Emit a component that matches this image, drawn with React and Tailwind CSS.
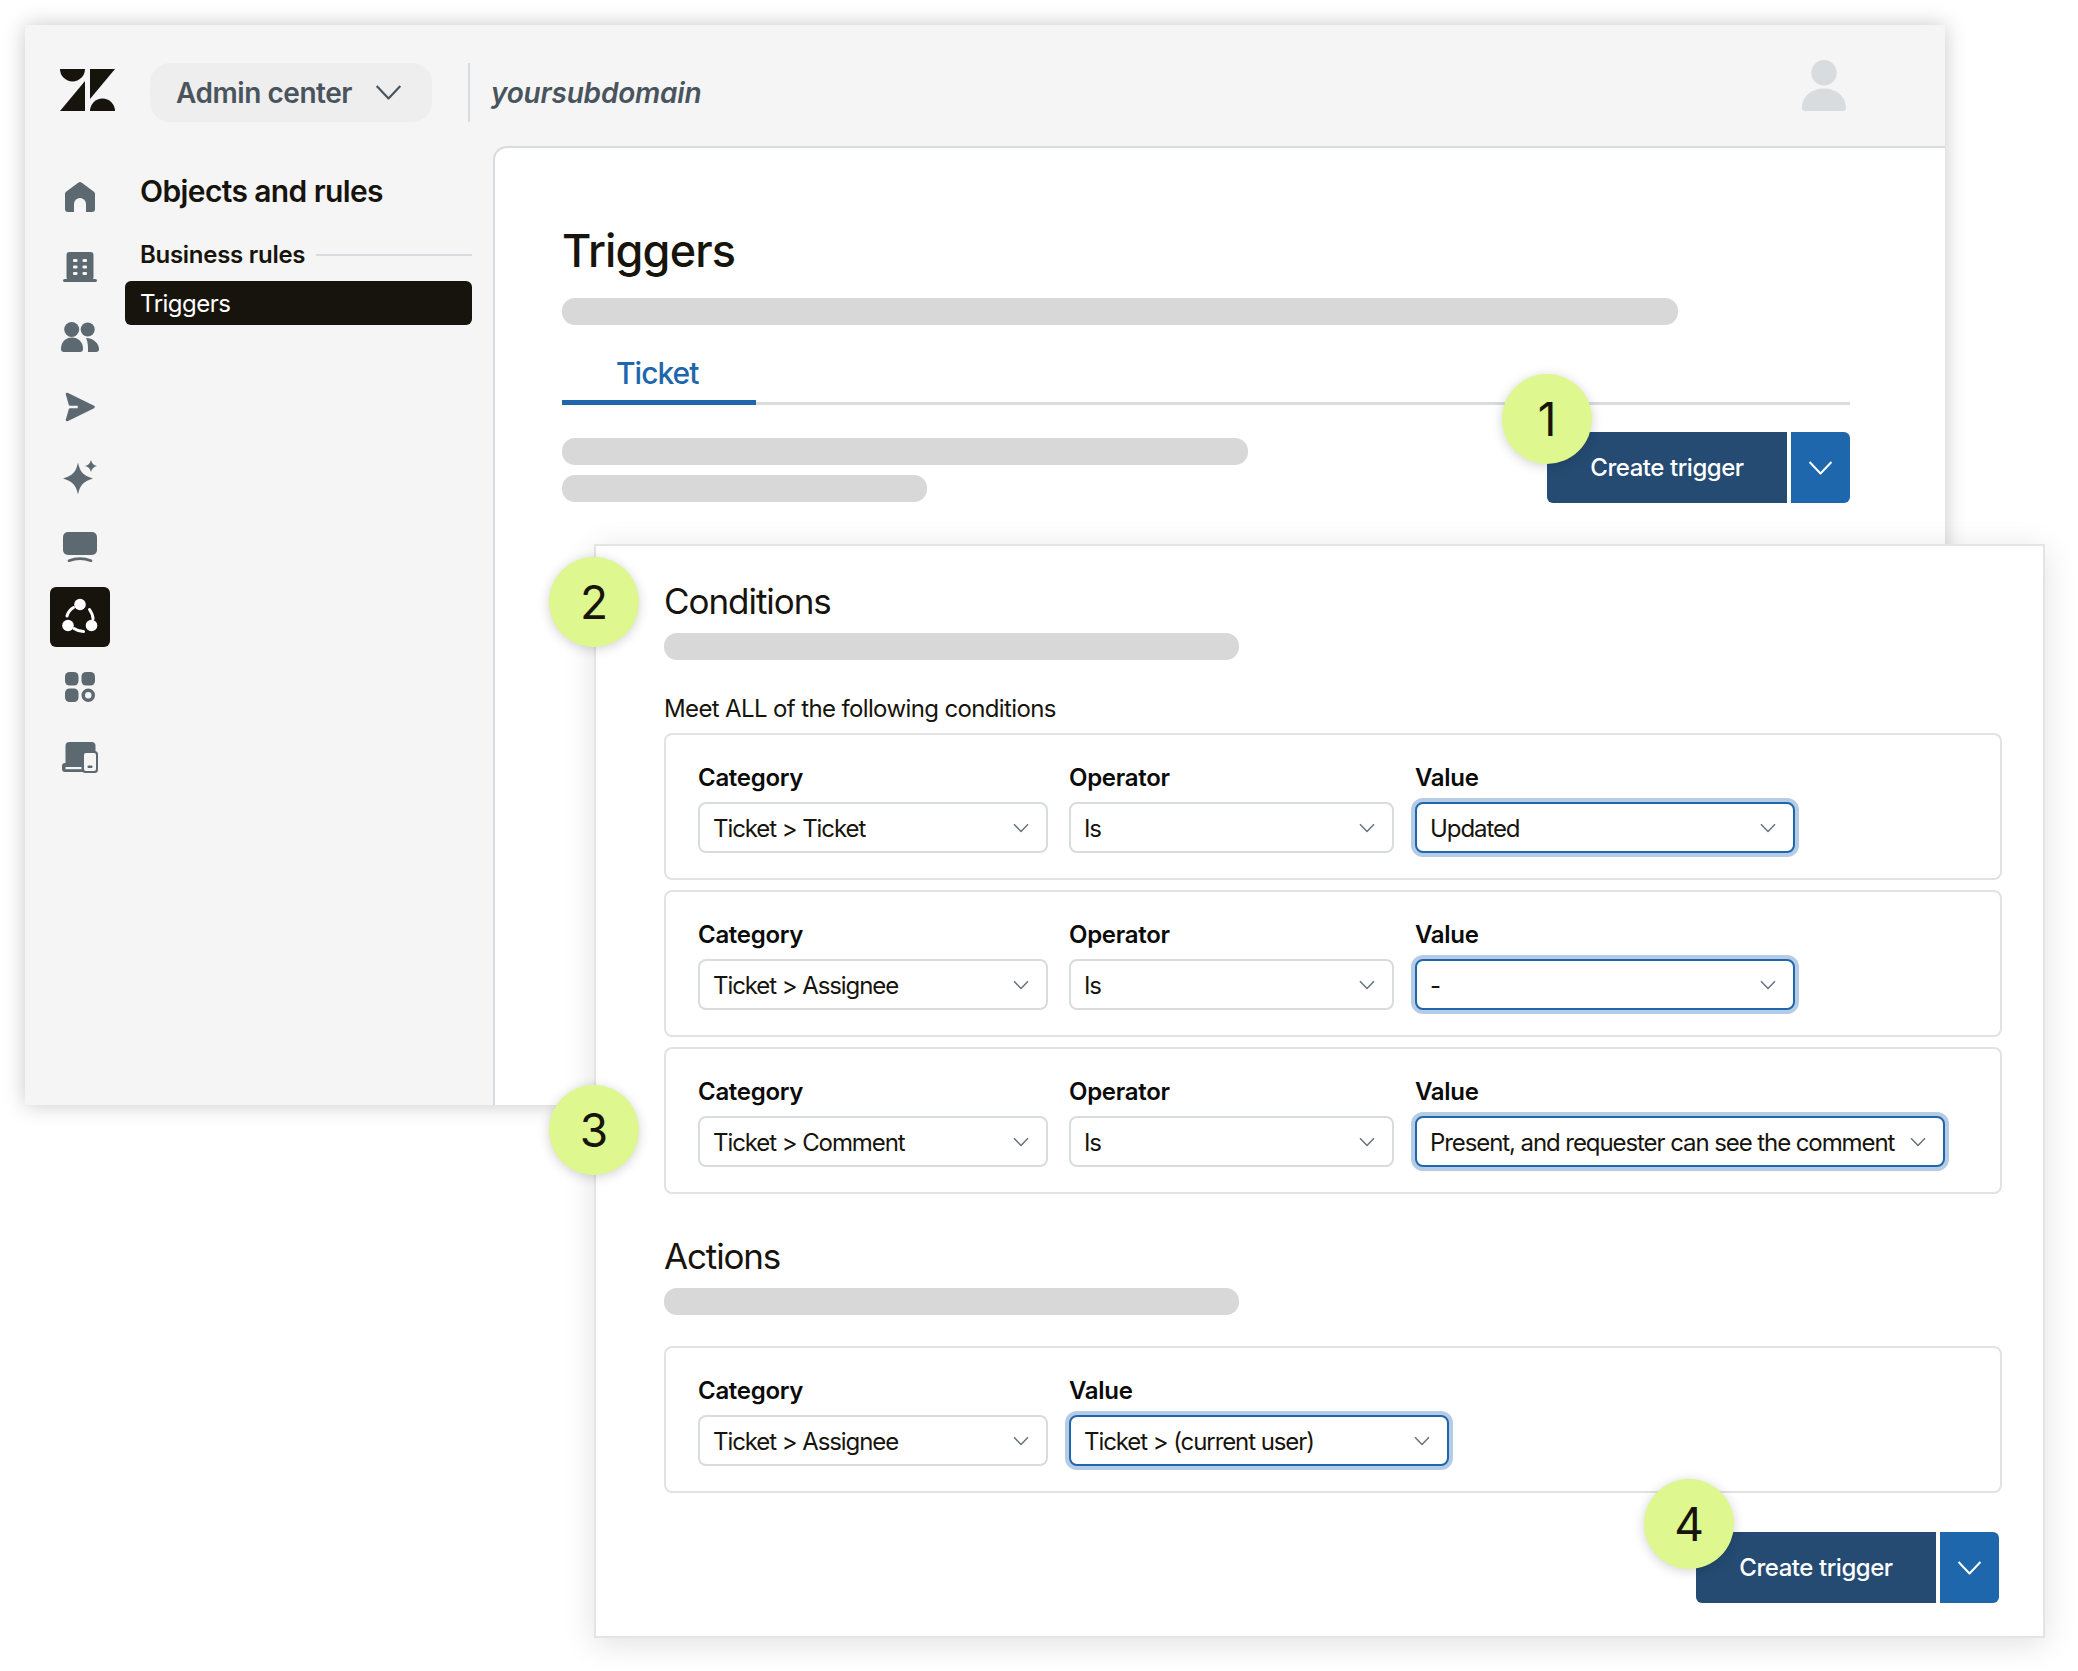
import React from 'react'

const Chevron = ({ className, width = 1.5 }) => (
  <svg viewBox="0 0 16 10" fill="none" className={className}>
    <path d="M1 1.2 8 8.5l7-7.3" stroke="currentColor" strokeWidth={width} strokeLinejoin="round" />
  </svg>
)

const Logo = () => (
  <svg viewBox="0 0 55 42" className="w-[55px] h-[42px] shrink-0 -mt-[6px]" fill="#17140d">
    <path d="M0 0h25a12.5 12.5 0 0 1-25 0Z" />
    <path d="M25 12v30H0Z" />
    <path d="M30 0h25L30 30Z" />
    <path d="M30 42a12.5 12.5 0 0 1 25 0Z" />
  </svg>
)

const HomeIcon = () => (
  <svg viewBox="0 0 30 30" className="w-[30px] h-[30px]" fill="#5c6970">
    <path d="M13.2.7 1.4 9.4C.5 10 0 11 0 12v15a3 3 0 0 0 3 3h6v-8a6 6 0 0 1 12 0v8h6a3 3 0 0 0 3-3V12c0-1-.5-2-1.4-2.6L16.8.7c-1.1-.8-2.5-.8-3.6 0Z" />
  </svg>
)

const BuildingIcon = () => (
  <svg viewBox="0 0 34 30" className="w-[34px] h-[30px]" fill="#5c6970">
    <rect x="3.5" y="0" width="27" height="28" rx="3" />
    <rect x="0" y="27" width="34" height="3" rx="1.5" />
    <g fill="#f5f5f5">
      <rect x="10" y="7" width="4.5" height="3" rx="1" />
      <rect x="19.5" y="7" width="4.5" height="3" rx="1" />
      <rect x="10" y="13.5" width="4.5" height="3" rx="1" />
      <rect x="19.5" y="13.5" width="4.5" height="3" rx="1" />
      <rect x="10" y="20" width="4.5" height="3" rx="1" />
      <rect x="19.5" y="20" width="4.5" height="3" rx="1" />
    </g>
  </svg>
)

const PeopleIcon = () => (
  <svg viewBox="0 0 38 30" className="w-[38px] h-[30px]" fill="#5c6970">
    <circle cx="10.7" cy="7.5" r="7.5" />
    <circle cx="26.7" cy="7.5" r="7" />
    <path d="M0 26.5C0 20 5 15.5 11 15.5S22 20 22 26.5V27a3 3 0 0 1-3 3H3a3 3 0 0 1-3-3Z" />
    <path d="M25 16c8 0 13 6 13 11a3 3 0 0 1-3 3h-8c0-6 0-10-2-14Z" />
  </svg>
)

const SendIcon = () => (
  <svg viewBox="0 0 30 30" className="w-[30px] h-[30px]" fill="#5c6970" stroke="#5c6970" strokeWidth="2.6" strokeLinejoin="round">
    <path d="M2 2 28.5 15 2 28 5 17.5h9v-5H5Z" />
  </svg>
)

const SparkleIcon = () => (
  <svg viewBox="0 0 34 34" className="w-[34px] h-[34px]" fill="#5c6970">
    <path d="M15 2.500c1.800 8.800 4.800 13 15 16-10.200 3-13.200 7.200-15 16-1.800-8.800-4.800-13-15-16 10.200-3 13.200-7.200 15-16Z" />
    <path d="M28 0c.8 3.400 2.600 5.200 6 6-3.400.8-5.200 2.600-6 6-.8-3.400-2.600-5.200-6-6 3.400-.8 5.200-2.600 6-6Z" />
  </svg>
)

const MonitorIcon = () => (
  <svg viewBox="0 0 34 30" className="w-[34px] h-[30px]" fill="#5c6970">
    <rect width="34" height="23" rx="5" />
    <path d="M6 28.800Q17 24.500 28 28.800" fill="none" stroke="#5c6970" strokeWidth="2.600" strokeLinecap="round" />
  </svg>
)

const RulesIcon = () => (
  <svg viewBox="0 0 60 60" className="w-[60px] h-[60px]" fill="#fff">
    <circle cx="30" cy="17.500" r="5.800" />
    <circle cx="18" cy="38.500" r="5.800" />
    <circle cx="41.500" cy="38.500" r="5.800" />
    <g fill="none" stroke="#fff" strokeWidth="3" strokeLinecap="round">
      <path d="M23.500 20.500Q18.500 23.500 17 29" />
      <path d="M39.500 22.500Q43 27.500 43 32" />
      <path d="M24 41.500Q28.500 44.500 33.500 44.500" />
    </g>
  </svg>
)

const AppsIcon = () => (
  <svg viewBox="0 0 30 30" className="w-[30px] h-[30px]" fill="#5c6970">
    <rect width="13.500" height="13.500" rx="4.500" />
    <rect x="16.500" width="13.500" height="13.500" rx="4.500" />
    <rect y="16.500" width="13.500" height="13.500" rx="4.500" />
    <circle cx="23.250" cy="23.250" r="5" fill="none" stroke="#5c6970" strokeWidth="3.500" />
  </svg>
)

const DevicesIcon = () => (
  <svg viewBox="0 0 36 31" className="w-[36px] h-[31px]" fill="#5c6970">
    <rect x="3.500" y="0" width="30" height="25" rx="4" />
    <rect x="0" y="21" width="24" height="9" rx="3" />
    <rect x="3.500" y="25" width="16" height="2.200" fill="#f5f5f5" />
    <rect x="20" y="9" width="16" height="22" rx="3.500" />
    <rect x="22" y="11" width="12" height="18" rx="2" fill="#f5f5f5" />
    <rect x="25.500" y="23.500" width="5" height="2.500" rx="1" />
  </svg>
)

const UserIcon = () => (
  <svg viewBox="0 0 44 51" className="w-[44px] h-[51px]" fill="#d8dcdf">
    <circle cx="22" cy="12.700" r="12.700" />
    <path d="M0 47.500C0 36.500 10 28.500 22 28.500S44 36.500 44 47.500a3 3 0 0 1-3 3.500H3a3 3 0 0 1-3-3.500Z" />
  </svg>
)

const railIcons = [
  <HomeIcon />, <BuildingIcon />, <PeopleIcon />, <SendIcon />, <SparkleIcon />, <MonitorIcon />,
  <div className="w-[60px] h-[60px] rounded-[6px] bg-[#17140d]"><RulesIcon /></div>,
  <AppsIcon />, <DevicesIcon />,
]

const Skeleton = ({ className }) => <div className={`h-[27px] rounded-[13px] bg-[#d8d8d8] ${className}`} />

const Select = ({ label, value, width, focus }) => (
  <div className={width}>
    <div className="text-[24px] leading-[32px] font-semibold tracking-[-0.3px] text-[#0b0b0b]">{label}</div>
    <div className={`mt-2 h-[51px] flex items-center justify-between pl-[13px] pr-[17px] rounded-[8px] bg-white border-2 ${focus ? 'border-[#1f67ad] ring-4 ring-[#b6cce4]' : 'border-[#d8dcdf]'}`}>
      <span className="pt-[2px] text-[24px] tracking-[-1.08px] text-[#17140d] whitespace-nowrap">{value}</span>
      <Chevron className="w-[16px] h-[10px] text-[#68737d] shrink-0" />
    </div>
  </div>
)

const Rule = ({ children, className = '' }) => (
  <div className={`h-[147px] rounded-[8px] border-2 border-[#e2e2e2] pt-[27px] pl-[32px] flex ${className}`}>
    {children}
  </div>
)

const CreateButton = ({ className = '' }) => (
  <div className={`flex h-[71px] w-[303px] gap-1 ${className}`}>
    <div className="w-[240px] rounded-l-[6px] bg-[#254b73] text-white text-[24px] font-medium tracking-[-0.45px] flex items-center justify-center">Create trigger</div>
    <div className="flex-1 rounded-r-[6px] bg-[#1f67ad] text-white flex items-center justify-center">
      <Chevron className="w-[25px] h-[16px]" width={1.3} />
    </div>
  </div>
)

const Badge = ({ className, children }) => (
  <div className={`absolute w-[90px] h-[90px] rounded-full bg-[#def78e] shadow-[0_2px_12px_rgba(0,0,0,0.18)] flex items-center justify-center pt-px text-[46px] text-[#17140d] ${className}`}>
    {children}
  </div>
)

const App = () => {
  return (
    <div className="relative w-[2078px] h-[1671px] overflow-hidden bg-white pl-[25px] pt-[25px] font-[Inter,sans-serif]">
      <div className="w-[1920px] h-[1080px] bg-[#f5f5f5] shadow-[0_0_20px_rgba(0,0,0,0.22)] flex flex-col overflow-hidden">
        <header className="h-[121px] shrink-0 flex items-start pt-[38px] pl-[35px]">
          <div className="h-[59px] flex items-center">
            <Logo />
            <div className="ml-[35px] w-[282px] h-[59px] rounded-[20px] bg-[#eeeeee] flex items-center pl-[26px] gap-[23px]">
              <span className="text-[28px] font-semibold tracking-[-0.45px] text-[#49545c]">Admin center</span>
              <Chevron className="w-[27px] h-[17px] text-[#49545c]" width={1.3} />
            </div>
            <div className="ml-[36px] w-[2px] h-[59px] bg-[#d8dcdf]" />
            <span className="ml-[21px] text-[28px] italic font-semibold tracking-[-0.2px] text-[#49545c]">yoursubdomain</span>
          </div>
          <div className="ml-auto mr-[99px] -mt-[3px]"><UserIcon /></div>
        </header>

        <div className="flex flex-1 min-h-0">
          <div className="w-[100px] shrink-0 pl-[25px] pt-[16px]">
            {railIcons.map((icon, i) => (
              <div key={i} className="w-[60px] h-[70px] flex items-center justify-center">{icon}</div>
            ))}
          </div>

          <nav className="w-[347px] shrink-0 pt-[25px]">
            <h2 className="pl-[15px] text-[30px] leading-[40px] font-semibold tracking-[-0.62px] text-[#17140d]">Objects and rules</h2>
            <div className="mt-[28px] pl-[15px] flex items-center gap-[11px]">
              <span className="text-[24px] leading-[32px] font-semibold tracking-[-0.28px] text-[#17140d]">Business rules</span>
              <div className="flex-1 h-[2px] bg-[#d8dcdf]" />
            </div>
            <div className="mt-[10px] h-[44px] rounded-[6px] bg-[#17140d] pl-[15px] pt-px flex items-center text-[24px] tracking-[-0.5px] text-white">Triggers</div>
          </nav>

          <main className="ml-[21px] flex-1 bg-white rounded-tl-[14px] border-l-2 border-t-2 border-[#d8dcdf] pl-[67px] pt-[75px]">
            <h1 className="text-[45px] leading-[56px] font-medium tracking-[-0.85px] text-[#17140d]">Triggers</h1>
            <Skeleton className="mt-[19px] w-[1116px]" />
            <div className="mt-[20px] w-[1288px] h-[60px] border-b-[3px] border-[#d8dcdf]">
              <div className="w-[194px] h-[60px] border-b-[5px] border-[#1f67ad] pl-[54px] pt-[2px] flex items-center text-[30px] font-medium tracking-[-1px] text-[#1f67ad]">Ticket</div>
            </div>
            <div className="mt-[27px] w-[1288px] flex justify-between items-start">
              <div className="pt-[6px]">
                <Skeleton className="w-[686px]" />
                <Skeleton className="mt-[10px] w-[365px]" />
              </div>
              <CreateButton />
            </div>
          </main>
        </div>
      </div>

      <section className="absolute left-[594px] top-[544px] w-[1451px] h-[1094px] bg-white border-2 border-[#e4e4e4] shadow-[0_6px_30px_rgba(0,0,0,0.12)] pl-[68px] pr-[41px] pt-[33px]">
        <h2 className="text-[35px] leading-[44px] tracking-[-1.05px] text-[#17140d]">Conditions</h2>
        <Skeleton className="mt-[10px] w-[575px]" />
        <p className="mt-[33px] text-[24px] leading-[32px] tracking-[-0.63px] text-[#17140d]">Meet ALL of the following conditions</p>
        <div className="mt-[8px] flex flex-col gap-[10px]">
          <Rule>
            <Select label="Category" value="Ticket > Ticket" width="w-[350px]" />
            <Select label="Operator" value="Is" width="ml-[21px] w-[325px]" />
            <Select label="Value" value="Updated" width="ml-[21px] w-[380px]" focus />
          </Rule>
          <Rule>
            <Select label="Category" value="Ticket > Assignee" width="w-[350px]" />
            <Select label="Operator" value="Is" width="ml-[21px] w-[325px]" />
            <Select label="Value" value="-" width="ml-[21px] w-[380px]" focus />
          </Rule>
          <Rule>
            <Select label="Category" value="Ticket > Comment" width="w-[350px]" />
            <Select label="Operator" value="Is" width="ml-[21px] w-[325px]" />
            <Select label="Value" value="Present, and requester can see the comment" width="ml-[21px] w-[530px]" focus />
          </Rule>
        </div>
        <h2 className="mt-[40px] text-[35px] leading-[44px] tracking-[-1.15px] text-[#17140d]">Actions</h2>
        <Skeleton className="mt-[10px] w-[575px]" />
        <Rule className="mt-[31px]">
          <Select label="Category" value="Ticket > Assignee" width="w-[350px]" />
          <Select label="Value" value="Ticket > (current user)" width="ml-[21px] w-[380px]" focus />
        </Rule>
        <div className="mt-[39px] flex justify-end pr-[3px]">
          <CreateButton />
        </div>
      </section>

      <Badge className="left-[1502px] top-[374px]">1</Badge>
      <Badge className="left-[549px] top-[557px]">2</Badge>
      <Badge className="left-[549px] top-[1085px]">3</Badge>
      <Badge className="left-[1644px] top-[1479px]">4</Badge>
    </div>
  )
}

export default App
